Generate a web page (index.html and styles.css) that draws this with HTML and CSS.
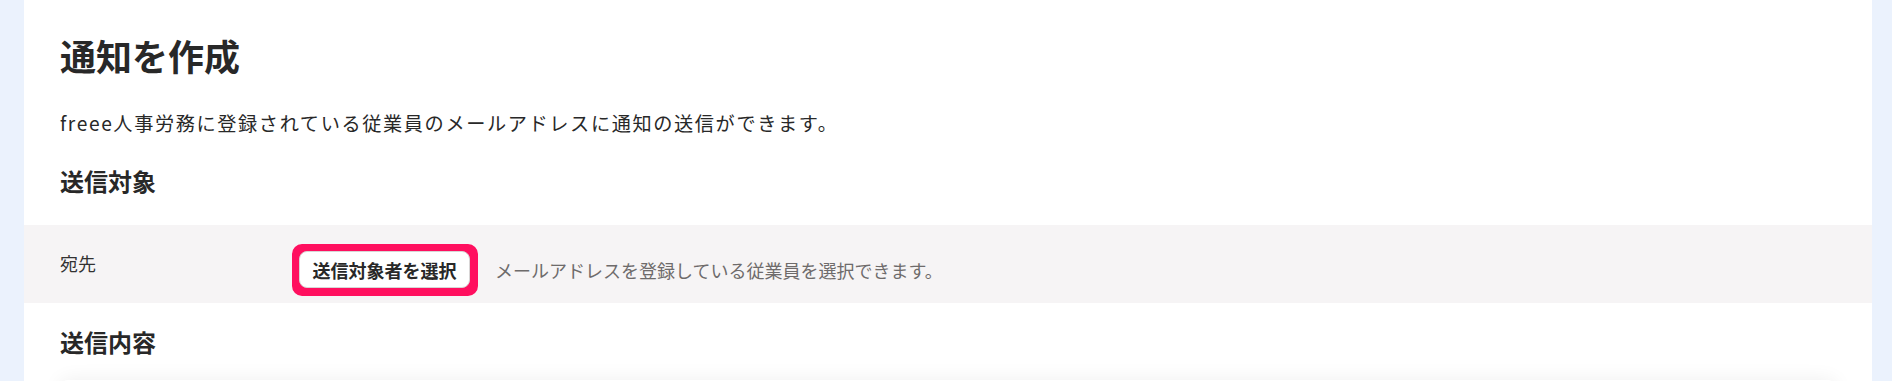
FILE: index.html
```html
<!DOCTYPE html>
<html lang="ja">
<head>
<meta charset="utf-8">
<title>通知を作成</title>
<link rel="stylesheet" href="styles.css">
</head>
<body>
<div class="page">
  <main class="card">
    <h1 class="title">通知を作成</h1>
    <p class="lead">freee人事労務に登録されている従業員のメールアドレスに通知の送信ができます。</p>
    <h2 class="section">送信対象</h2>
    <div class="form-row">
      <div class="form-label">宛先</div>
      <div class="form-field">
        <span class="highlight"><button class="btn" type="button">送信対象者を選択</button></span>
        <span class="help">メールアドレスを登録している従業員を選択できます。</span>
      </div>
    </div>
    <h2 class="section section-2">送信内容</h2>
    <div class="sub-card"></div>
  </main>
</div>
</body>
</html>
```

FILE: styles.css
```css
html, body {
  margin: 0;
  padding: 0;
  height: 100%;
  overflow: hidden;
}
body {
  background: #ebf2fd;
  font-family: "Noto Sans CJK JP", "Noto Sans", sans-serif;
  color: #282828;
}
.page {
  display: flex;
  padding: 0 20px 0 24px;
  height: 100%;
}
.card {
  flex: 1;
  background: #ffffff;
  padding: 30px 36px 0 36px;
  min-height: 100%;
  box-sizing: border-box;
}
.title {
  margin: 0;
  font-size: 36px;
  line-height: 50px;
  font-weight: 700;
}
.lead {
  margin: 28px 0 0 0;
  font-size: 19.2px;
  line-height: 30px;
  letter-spacing: 1.6px;
}
.section {
  margin: 25px 0 0 0;
  font-size: 24px;
  line-height: 36px;
  font-weight: 700;
}
.section-2 {
  margin-top: 21px;
}
.form-row {
  display: flex;
  align-items: flex-start;
  margin: 26px -36px 0 -36px;
  padding: 19px 36px 7px 36px;
  background: #f6f4f5;
}
.form-label {
  width: 232px;
  flex: none;
  margin-top: 6px;
  font-size: 18px;
  line-height: 27px;
  color: #323232;
}
.form-field {
  display: flex;
  align-items: center;
  gap: 17px;
}
.highlight {
  display: inline-flex;
  border: 7px solid #ff0f5f;
  border-radius: 10px;
  padding: 0 1px 1px 0;
  background: #ff0f5f;
}
.btn {
  height: 37px;
  width: 171px;
  padding: 0;
  box-sizing: border-box;
  background: #ffffff;
  border: 1px solid #d8d5d5;
  border-radius: 8px;
  font-family: inherit;
  font-size: 18px;
  font-weight: 700;
  color: #282828;
  line-height: 1;
}
.help {
  font-size: 18px;
  line-height: 27px;
  color: #6e6b6b;
}
.sub-card {
  margin-top: 20px;
  height: 200px;
  background: #ffffff;
  border-radius: 8px;
  box-shadow: 0 0 20px rgba(0, 0, 0, 0.07);
}
```
